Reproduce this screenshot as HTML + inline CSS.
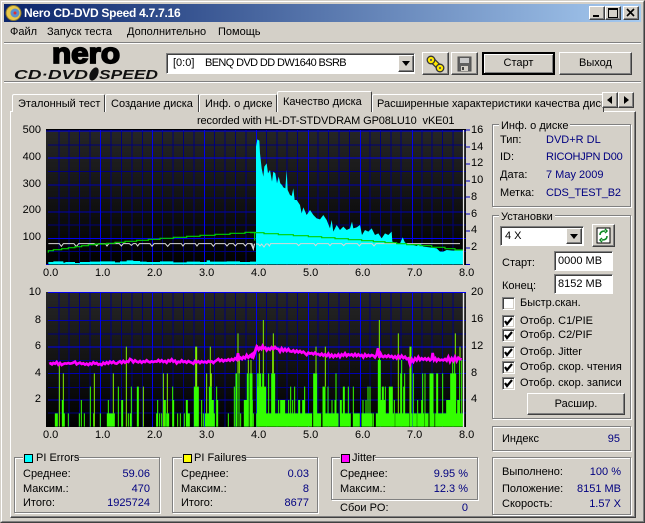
<!DOCTYPE html>
<html><head><meta charset="utf-8">
<style>
html,body{margin:0;padding:0;background:#d4d0c8}
#w{position:relative;width:645px;height:523px;overflow:hidden;background:#d4d0c8;font:11px "Liberation Sans",sans-serif;color:#000}
#w div,#w span.a{position:absolute;box-sizing:border-box}
.t{white-space:nowrap;line-height:13px;height:13px}
.r{text-align:right}
.b{color:#000080}
.g{border:1px solid #808080;box-shadow:1px 1px 0 #fff,inset 1px 1px 0 #fff}
.btn{background:#d4d0c8;border:1px solid;border-color:#fff #404040 #404040 #fff;box-shadow:inset -1px -1px 0 #808080;text-align:center}
.in{background:#fff;border:1px solid;border-color:#808080 #fff #fff #808080;box-shadow:inset 1px 1px 0 #404040}
.cb{width:13px;height:13px;background:#fff;border:1px solid;border-color:#808080 #fff #fff #808080;box-shadow:inset 1px 1px 0 #404040,inset -1px -1px 0 #d4d0c8}
.tab{background:#d4d0c8;border-top:1px solid #fff;border-left:1px solid #fff;border-right:1px solid #404040;border-radius:2px 2px 0 0;white-space:nowrap;overflow:hidden;padding:3px 0 0 5px;line-height:13px}
.sq{width:9px;height:9px;border:1px solid #000}
.leg{background:#d4d0c8;height:13px;line-height:13px;white-space:nowrap}
.ax{font-size:11px;white-space:nowrap;line-height:13px;height:13px}
svg{position:absolute;left:0;top:0}
</style></head><body><div id="w">

<div style="left:0;top:0;width:645px;height:523px;border:1px solid;border-color:#d4d0c8 #404040 #404040 #d4d0c8"></div>
<div style="left:1px;top:1px;width:643px;height:521px;border:1px solid;border-color:#fff #808080 #808080 #fff"></div>

<div style="left:4px;top:4px;width:637px;height:18px;background:linear-gradient(90deg,#0a246a,#a6caf0)"></div>
<div class="t" style="left:24px;top:6px;color:#fff;font-weight:bold;font-size:12px;line-height:14px;letter-spacing:-.27px">Nero CD-DVD Speed 4.7.7.16</div>
<svg width="645" height="523">
<circle cx="13.5" cy="13" r="7.5" fill="#e8c84a" stroke="#8a7a30" stroke-width="1"/>
<circle cx="15" cy="13" r="4.5" fill="#5a8fd0"/><circle cx="15" cy="13" r="1.5" fill="#e03030"/>
</svg>
<div class="btn" style="left:589px;top:6px;width:16px;height:14px"></div>
<div style="left:593px;top:15px;width:6px;height:2px;background:#000"></div>
<div class="btn" style="left:605px;top:6px;width:16px;height:14px"></div>
<div style="left:608px;top:8px;width:10px;height:10px;border:1px solid #000;border-top-width:2px"></div>
<div class="btn" style="left:623px;top:6px;width:16px;height:14px"></div>
<svg width="645" height="523"><path d="M627 9l7 7M634 9l-7 7" stroke="#000" stroke-width="1.600" fill="none"/></svg>

<div class="t" style="left:10px;top:26px">Файл</div>
<div class="t" style="left:47px;top:26px">Запуск теста</div>
<div class="t" style="left:127px;top:26px">Дополнительно</div>
<div class="t" style="left:218px;top:26px">Помощь</div>
<div style="left:4px;top:42px;width:637px;height:2px;border-top:1px solid #808080;border-bottom:1px solid #fff"></div>
<div style="left:4px;top:81px;width:637px;height:2px;border-top:1px solid #808080;border-bottom:1px solid #fff"></div>

<svg width="645" height="523">
<text x="52" y="63" font-family="Liberation Sans" font-weight="bold" font-size="29" textLength="68" lengthAdjust="spacingAndGlyphs" stroke="#000" stroke-width="1.700">nero</text>
<text x="14" y="79" font-family="Liberation Sans" font-weight="bold" font-style="italic" font-size="13" textLength="74" lengthAdjust="spacingAndGlyphs" fill="#111">CD·DVD</text>
<ellipse cx="94" cy="74" rx="4" ry="7" transform="rotate(25 94 74)" fill="#111"/>
<text x="99" y="79" font-family="Liberation Sans" font-weight="bold" font-style="italic" font-size="13" textLength="59" lengthAdjust="spacingAndGlyphs" fill="#111">SPEED</text>
</svg>

<div class="in" style="left:166px;top:53px;width:249px;height:21px"></div>
<div class="t" style="left:173px;top:57px">[0:0]</div>
<div class="t" style="left:205px;top:57px;letter-spacing:-.62px">BENQ DVD DD DW1640 BSRB</div>
<div class="btn" style="left:398px;top:55px;width:16px;height:17px"></div>
<div style="left:402px;top:61px;width:0;height:0;border:4px solid transparent;border-top:5px solid #000;border-bottom:0"></div>

<div class="btn" style="left:422px;top:52px;width:27px;height:23px"></div>
<svg width="645" height="523">
<path d="M432 60L440 68" stroke="#333" stroke-width="6" fill="none"/>
<path d="M432 60L440 68" stroke="#ffe800" stroke-width="3.500" fill="none"/>
<g fill="#ffe800" stroke="#333" stroke-width="1.300">
<circle cx="431" cy="60" r="3.800"/><circle cx="440" cy="68" r="3.800"/>
</g>
<circle cx="431" cy="60" r="1.100" fill="#555"/><circle cx="440" cy="68" r="1.100" fill="#555"/>
</svg>
<div class="btn" style="left:451px;top:52px;width:27px;height:23px"></div>
<svg width="645" height="523">
<path d="M458 57h13v14h-13z" fill="#606060" stroke="#505050"/>
<path d="M460 58h9v5h-9z" fill="#c8c8c8"/><path d="M461 66h7v5h-7z" fill="#d4d0c8"/><path d="M462 67h2v3h-2z" fill="#404040"/>
</svg>
<div class="btn t" style="left:482px;top:52px;width:73px;height:23px;border:2px solid #000;box-shadow:inset 1px 1px 0 #fff,inset -1px -1px 0 #808080;line-height:19px">Старт</div>
<div class="btn t" style="left:559px;top:52px;width:73px;height:23px;line-height:21px">Выход</div>

<div style="left:10px;top:111px;width:626px;height:407px;border:1px solid;border-color:#fff #404040 #404040 #fff;box-shadow:inset -1px -1px 0 #808080"></div>
<div class="tab" style="left:12px;top:94px;width:93px;height:18px">Эталонный тест</div>
<div class="tab" style="left:105px;top:94px;width:94px;height:18px">Создание диска</div>
<div class="tab" style="left:199px;top:94px;width:78px;height:18px">Инф. о диске</div>
<div class="tab" style="left:372px;top:94px;width:232px;height:18px;padding-left:4px">Расширенные характеристики качества диска</div>
<div class="tab" style="left:277px;top:91px;width:95px;height:21px;padding-top:4px;z-index:2">Качество диска</div>
<div class="btn" style="left:602px;top:92px;width:16px;height:16px"></div>
<div style="left:607px;top:96px;width:0;height:0;border:4px solid transparent;border-right:5px solid #000;border-left:0"></div>
<div class="btn" style="left:618px;top:92px;width:16px;height:16px"></div>
<div style="left:624px;top:96px;width:0;height:0;border:4px solid transparent;border-left:5px solid #000;border-right:0"></div>

<div class="t" style="left:197px;top:115px;letter-spacing:-.11px">recorded with HL-DT-STDVDRAM GP08LU10&nbsp; vKE01</div>

<svg width="645" height="523" shape-rendering="crispEdges">
<defs>
<linearGradient id="bg" x1="0" y1="0" x2="0" y2="1"><stop offset="0" stop-color="#262626"/><stop offset="1" stop-color="#000"/></linearGradient>
</defs>
<rect x="46" y="129" width="420" height="136" fill="url(#bg)"/>
<rect x="46" y="292" width="420" height="135" fill="url(#bg)"/>
<rect x="46" y="129" width="420" height="1.5" fill="#000"/>
<!-- chart 1 grid -->
<path d="M58.8 130V265M69.2 130V265M79.6 130V265M90 130V265M111.2 130V265M121.6 130V265M132 130V265M142.4 130V265M162.6 130V265M173 130V265M183.4 130V265M193.8 130V265M214.6 130V265M225 130V265M235.4 130V265M245.8 130V265M266.4 130V265M276.8 130V265M287.2 130V265M297.6 130V265M318.2 130V265M328.6 130V265M339 130V265M349.4 130V265M370 130V265M380.4 130V265M390.8 130V265M401.2 130V265M421.8 130V265M432.2 130V265M442.6 130V265M453 130V265M48 145H466M48 171.500H466M48 198H466M48 225H466M48 251.500H466" stroke="#00007a" stroke-width="1" fill="none"/>
<path d="M48 185H466M48 212H466" stroke="#0000b0" stroke-width="1" fill="none"/>
<path d="M48 131H466M48 158H466M48 238.500H466M100.500 130V265M152.500 130V265M204.500 130V265M256.500 130V265M308.500 130V265M360.500 130V265M412.500 130V265" stroke="#0000f0" stroke-width="1.400" fill="none"/>
<!-- chart 2 grid -->
<path d="M58.8 293V427M69.2 293V427M79.6 293V427M90 293V427M111.2 293V427M121.6 293V427M132 293V427M142.4 293V427M162.6 293V427M173 293V427M183.4 293V427M193.8 293V427M214.6 293V427M225 293V427M235.4 293V427M245.8 293V427M266.4 293V427M276.8 293V427M287.2 293V427M297.6 293V427M318.2 293V427M328.6 293V427M339 293V427M349.4 293V427M370 293V427M380.4 293V427M390.8 293V427M401.2 293V427M421.8 293V427M432.2 293V427M442.6 293V427M453 293V427M48 307.500H466M48 334H466M48 360.500H466M48 387.500H466M48 413H466" stroke="#00007a" stroke-width="1" fill="none"/>
<path d="M48 320.500H466M48 373.500H466M48 400H466" stroke="#0000b0" stroke-width="1" fill="none"/>
<path d="M48 292.500H466M48 347H466M100.500 293V427M152.500 293V427M204.500 293V427M256.500 293V427M308.500 293V427M360.500 293V427M412.500 293V427" stroke="#0000f0" stroke-width="1.400" fill="none"/>
</svg>

<svg width="645" height="523">
<!-- chart1 left cyan -->
<g transform="translate(0,120) scale(.33333)">
<path fill="#00ffff" d="M145 433V426H160V424H190V428H196V426H225V429H240V426H270V425H300V424H345V427H360V424H380V421H400V423H420V425H440V426H480V424H520V427H560V425H600V426H620V421H630V425H680V424H720V426H765V433Z"/>
<path fill="none" stroke="#d8d8d8" stroke-width="3" d="M145 371H178L184 379 190 371H222L229 380 236 371H284L290 378 296 371H316L321 378 326 371H358L364 378 370 371H388L394 376 400 371H408L413 378 418 371H450L456 379 462 371H496L503 379 510 371H544L549 378 554 371H586L591 378 596 371H634L640 379 646 371H675L681 378 687 371H700L706 378 712 371H730L736 378 742 371H752L755 376 760 388 763 372"/>
<path fill="none" stroke="#00d000" stroke-width="3.600" d="M145 398V392H160V389H185V386H205V383H225V380H245V377H265V374H285V372H320V370H345V367H375V364H410V361H445V358H480V355H520V352H560V349H600V346H645V343H690V340H735V337H780M764 338V362"/>
</g>
<!-- chart1 right cyan -->
<g transform="translate(250,120) scale(.33333)">
<path fill="#00ffff" d="M0 433V425H18V80L22 58 28 62 30 100 35 145 40 170 43 140 50 130 54 160 60 150 66 185 70 155 76 160 81 190 86 170 91 190 96 195 100 202 106 205 110 150 113 210 120 225 125 228 130 205 134 240 140 240 150 255 155 280 160 262 170 285 180 270 190 285 200 295 210 298 220 285 230 300 240 325 245 300 250 335 260 315 270 330 280 320 290 330 300 325 306 305 310 325 320 322 330 315 336 345 345 330 355 335 365 325 375 345 385 340 395 355 405 340 415 345 425 335 427 365 440 370 450 370 458 352 465 368 480 372 500 378 510 370 520 380 540 382 560 385 570 395 580 395 590 390 610 392 630 390 642 390V433Z"/>
<path fill="none" stroke="#d8d8d8" stroke-width="3" d="M0 371H6L10 386 14 371M18 372H25L30 378 35 372 42 381 48 372H54L58 378 62 371H140L146 377 152 371H192L197 377 202 371H235L240 377 245 371H275L281 377 287 371H322L328 378 334 371H366L372 378 378 371H440M470 371H630"/>
<path fill="none" stroke="#00d000" stroke-width="3.600" d="M0 338H42V341H85V344H130V347H175V350H215V353H255V356H295V359H335V362H370V365H405V368H440V371H470V374H510V377H545V382H585V386H615V390H640"/>
</g>
<!-- right markers white line -->
<path d="M463.500 130V265M463.500 293V427" stroke="#e8e8e8" stroke-width="1.200" fill="none"/>
<!-- chart2 bars left -->
<g transform="translate(0,285) scale(.33333)">
<path fill="none" stroke="#33ff00" stroke-width="3" d="M166 425V385M169 425V385M172 425V385M187 425V345M190 425V345M193 425V385M205 425V385M238 425V385M244 425V345M253 425V385M271 425V305M281 425V385M301 425V385M322 425V385M325 425V345M328 425V385M331 425V385M334 425V385M337 425V385M340 425V385M343 425V385M355 425V305M365 425V345M368 425V345M385 425V385M391 425V385M394 425V305M412 425V305M415 425V305M470 425V385M473 425V345M479 425V385M485 425V385M493 425V345M496 425V345M500 425V385M503 425V385M506 425V385M518 425V305M521 425V345M533 425V385M541 425V385M553 425V385M559 425V345M562 425V345M565 425V385M568 425V385M583 425V305M586 425V305M589 425V305M592 425V305M595 425V305M605 425V345M610 425V385M616 425V385M619 425V385M622 425V385M625 425V385M628 425V305M631 425V305M634 425V305M637 425V345M640 425V345M643 425V385M650 425V305M653 425V345M685 425V385M703 425V305M708 425V265M711 425V265M717 425V265M722 425V385M733 425V345M736 425V345M739 425V345M742 425V265M745 425V265M751 425V305M754 425V305M757 425V345M772 425V265M775 425V345M778 425V345"/>
<path fill="none" stroke="#80f000" stroke-width="3" d="M178 425V240M190 345V265M283 425V265M340 385V265M379 425V185M430 425V305M490 425V265M502 385V265M587 305V185M590 305V185M620 385V265M631 305V185M634 305V265M714 265V145M718 265V225M745 265V225M753 305V225"/>
<path fill="none" stroke="#ff00ff" stroke-width="8" d="M148 237 152 235 156 238 160 234 165 236 170 231 175 239 180 234 185 240 190 237 195 235 200 236 205 234 210 236 215 235 220 233 225 230 230 238 235 235 240 233 245 237 250 235 255 239 260 236 265 240 270 235 275 238 280 232 285 236 290 234 295 239 300 237 305 240 310 233 315 237 320 232 325 236 330 230 335 234 340 230 345 235 350 236 355 232 360 229 365 234 370 228 375 233 380 229 385 231 390 222 395 225 400 232 405 226 410 230 415 232 420 228 425 233 430 229 435 231 440 226 445 230 450 232 455 229 460 231 465 229 470 230 475 225 480 230 485 226 490 231 495 228 500 233 505 226 510 229 515 223 520 230 525 227 530 235 535 230 540 232 545 226 550 231 555 229 560 233 565 228 570 231 575 233 580 236 585 228 590 232 595 229 600 234 605 229 610 232 615 230 620 233 625 228 630 231 635 229 640 234 645 229 650 226 655 222 660 228 665 224 670 229 675 225 680 227 685 223 690 227 695 222 700 226 705 220 710 224 714 205 718 222 722 218 726 222 730 216 735 220 740 210 745 218 750 212 755 216 760 205 765 200 770 185 775 192 780 190"/>
</g>
<!-- chart2 bars right -->
<g transform="translate(250,285) scale(.33333)">
<path fill="none" stroke="#33ff00" stroke-width="3" d="M0 425V265M3 425V265M6 425V265M10 425V385M20 425V385M23 425V305M26 425V265M29 425V265M32 425V265M35 425V305M38 425V265M41 425V265M44 425V305M47 425V305M50 425V385M53 425V385M56 425V265M59 425V385M62 425V385M65 425V265M68 425V265M71 425V265M74 425V265M77 425V385M80 425V385M83 425V385M86 425V345M89 425V385M92 425V345M95 425V345M98 425V345M101 425V345M104 425V345M107 425V385M110 425V385M113 425V385M116 425V345M119 425V385M122 425V305M125 425V385M128 425V345M131 425V385M134 425V305M137 425V385M140 425V385M143 425V385M146 425V345M149 425V345M152 425V385M155 425V385M158 425V345M161 425V345M164 425V305M167 425V385M170 425V385M173 425V385M176 425V385M179 425V385M182 425V385M185 425V385M191 425V265M194 425V265M197 425V265M200 425V265M203 425V385M206 425V385M209 425V385M212 425V385M219 425V305M222 425V305M225 425V305M228 425V385M231 425V385M234 425V305M237 425V385M240 425V385M243 425V385M246 425V345M249 425V385M252 425V385M255 425V345M258 425V265M261 425V385M264 425V385M271 425V345M274 425V345M277 425V385M280 425V305M283 425V305M286 425V385M289 425V385M292 425V385M295 425V305M298 425V385M301 425V385M310 425V305M313 425V385M316 425V385M319 425V385M322 425V385M325 425V385M328 425V385M336 425V385M339 425V345M342 425V385M345 425V385M348 425V345M351 425V385M354 425V305M357 425V385M360 425V305M363 425V385M366 425V385M370 425V385M379 425V385M382 425V385M385 425V225M388 425V225M391 425V225M394 425V345M397 425V305M400 425V305M403 425V345M406 425V305M409 425V385M412 425V385M415 425V385M418 425V305M421 425V305M424 425V305M427 425V305M430 425V385M433 425V345M437 425V385M440 425V385M443 425V385M446 425V385M449 425V385M452 425V265M455 425V225M458 425V385M461 425V305M464 425V265M467 425V385M470 425V385M473 425V385M476 425V385M480 425V185M483 425V185M486 425V385M490 425V265M493 425V385M496 425V385M499 425V385M503 425V345M506 425V385M509 425V385M512 425V385M515 425V345M518 425V265M521 425V385M525 425V265M528 425V385M531 425V385M534 425V385M540 425V265M543 425V265M546 425V265M549 425V265M552 425V385M557 425V385M560 425V265M563 425V265M566 425V385M569 425V385M572 425V385M575 425V385M578 425V265M581 425V385M584 425V385M587 425V385M590 425V345M593 425V345M596 425V345M599 425V345M602 425V265M605 425V265M608 425V225M611 425V265M614 425V225M617 425V265M620 425V385M623 425V345M626 425V345M629 425V225M632 425V385M635 425V225M638 425V385"/>
<path fill="none" stroke="#80f000" stroke-width="3" d="M3 265V225M28 265V205M40 265V105M68 265V185M70 265V145M198 265V185M226 305V185M388 225V105M445 385V145M480 385V185M616 225V145M630 225V185"/>
<path fill="none" stroke="#ff00ff" stroke-width="8" d="M0 212 5 208 10 216 14 205 18 190 22 186 26 194 30 188 34 192 38 183 42 190 46 188 50 196 55 190 60 194 65 187 70 192 75 186 80 191 85 192 90 200 95 190 100 198 105 192 110 198 115 192 120 199 125 200 130 196 135 202 140 197 145 202 150 198 155 203 160 200 165 205 170 210 175 203 180 206 185 204 190 208 195 203 200 208 205 207 210 211 215 206 220 212 225 208 230 213 235 206 240 215 245 209 250 216 255 210 260 214 265 208 270 216 275 208 280 212 285 205 290 213 295 208 300 211 305 208 310 213 315 207 320 213 325 208 330 213 335 210 340 217 345 208 350 214 355 210 360 214 365 210 370 212 375 217 380 209 384 190 388 218 392 206 396 214 400 216 405 212 410 216 415 211 420 216 425 213 430 219 435 214 440 220 445 212 450 219 455 212 460 219 465 215 470 222 475 220 480 238 485 222 490 230 495 220 500 226 505 216 510 225 515 220 520 224 525 220 530 225 535 220 540 226 545 222 548 204 552 225 556 220 560 228 565 222 570 226 575 224 580 226 585 222 590 227 595 216 600 230 605 220 610 228 615 216 620 228 625 218 630 222 635 224"/>
</g>
<path d="M463.500 293V427" stroke="#e8e8e8" stroke-width="1.200" fill="none"/>
<!-- tick marks right -->
<path d="M466 130h4M466 147h4M466 164h4M466 181h4M466 197h4M466 214h4M466 231h4M466 248h4M466 264.500h4" stroke="#0000c0" fill="none"/>
<path d="M46 131h3M46 264.500h3" stroke="#0000c0" fill="none"/>
</svg>

<!-- axis labels chart1 -->
<div class="ax r" style="left:10px;top:124px;width:31px">500</div>
<div class="ax r" style="left:10px;top:151px;width:31px">400</div>
<div class="ax r" style="left:10px;top:178px;width:31px">300</div>
<div class="ax r" style="left:10px;top:204px;width:31px">200</div>
<div class="ax r" style="left:10px;top:231px;width:31px">100</div>
<div class="ax" style="left:471px;top:124px">16</div>
<div class="ax" style="left:471px;top:141px">14</div>
<div class="ax" style="left:471px;top:157px">12</div>
<div class="ax" style="left:471px;top:174px">10</div>
<div class="ax" style="left:471px;top:191px">8</div>
<div class="ax" style="left:471px;top:208px">6</div>
<div class="ax" style="left:471px;top:224px">4</div>
<div class="ax" style="left:471px;top:241px">2</div>
<div class="ax" style="left:43px;top:267px">0.0</div>
<div class="ax" style="left:95px;top:267px">1.0</div>
<div class="ax" style="left:147px;top:267px">2.0</div>
<div class="ax" style="left:199px;top:267px">3.0</div>
<div class="ax" style="left:251px;top:267px">4.0</div>
<div class="ax" style="left:303px;top:267px">5.0</div>
<div class="ax" style="left:355px;top:267px">6.0</div>
<div class="ax" style="left:407px;top:267px">7.0</div>
<div class="ax" style="left:459px;top:267px">8.0</div>
<!-- axis labels chart2 -->
<div class="ax r" style="left:10px;top:286px;width:31px">10</div>
<div class="ax r" style="left:10px;top:314px;width:31px">8</div>
<div class="ax r" style="left:10px;top:340px;width:31px">6</div>
<div class="ax r" style="left:10px;top:367px;width:31px">4</div>
<div class="ax r" style="left:10px;top:393px;width:31px">2</div>
<div class="ax" style="left:471px;top:286px">20</div>
<div class="ax" style="left:471px;top:313px">16</div>
<div class="ax" style="left:471px;top:340px">12</div>
<div class="ax" style="left:471px;top:367px">8</div>
<div class="ax" style="left:471px;top:393px">4</div>
<div class="ax" style="left:43px;top:429px">0.0</div>
<div class="ax" style="left:95px;top:429px">1.0</div>
<div class="ax" style="left:147px;top:429px">2.0</div>
<div class="ax" style="left:199px;top:429px">3.0</div>
<div class="ax" style="left:251px;top:429px">4.0</div>
<div class="ax" style="left:303px;top:429px">5.0</div>
<div class="ax" style="left:355px;top:429px">6.0</div>
<div class="ax" style="left:407px;top:429px">7.0</div>
<div class="ax" style="left:459px;top:429px">8.0</div>

<!-- Disc info -->
<div class="g" style="left:492px;top:124px;width:139px;height:83px"></div>
<div class="leg" style="left:499px;top:120px;padding:0 2px">Инф. о диске</div>
<div class="t" style="left:500px;top:134px">Тип:</div><div class="t b" style="left:546px;top:134px">DVD+R DL</div>
<div class="t" style="left:500px;top:151px">ID:</div><div class="t b" style="left:546px;top:151px;letter-spacing:-.25px">RICOHJPN D00</div>
<div class="t" style="left:500px;top:169px">Дата:</div><div class="t b" style="left:546px;top:169px">7 May 2009</div>
<div class="t" style="left:500px;top:187px">Метка:</div><div class="t b" style="left:546px;top:187px;letter-spacing:-.2px">CDS_TEST_B2</div>

<!-- Settings -->
<div class="g" style="left:492px;top:215px;width:139px;height:204px"></div>
<div class="leg" style="left:499px;top:211px;padding:0 2px">Установки</div>
<div class="in" style="left:500px;top:226px;width:84px;height:20px"></div>
<div class="t" style="left:505px;top:230px">4 X</div>
<div class="btn" style="left:566px;top:228px;width:16px;height:16px"></div>
<div style="left:570px;top:234px;width:0;height:0;border:4px solid transparent;border-top:5px solid #000;border-bottom:0"></div>
<div class="btn" style="left:592px;top:224px;width:23px;height:23px"></div>
<svg width="645" height="523">
<rect x="597" y="228" width="13" height="15" fill="#fff" stroke="#000"/>
<path d="M600 235c0-3 2-4 5-4M605 229l2 2-2 2M607 236c0 3-2 4-5 4M602 238l-2 2 2 2" stroke="#0a8a20" stroke-width="1.500" fill="none"/>
</svg>
<div class="t" style="left:502px;top:257px">Старт:</div>
<div class="in t" style="left:554px;top:251px;width:59px;height:20px;padding:3px 0 0 3px;line-height:13px">0000 MB</div>
<div class="t" style="left:502px;top:280px">Конец:</div>
<div class="in t" style="left:554px;top:274px;width:59px;height:20px;padding:3px 0 0 3px;line-height:13px">8152 MB</div>

<div class="cb" style="left:502px;top:297px"></div>
<div class="t" style="left:520px;top:297px">Быстр.скан.</div>
<div class="cb" style="left:502px;top:315px"></div><div class="t" style="left:520px;top:315px">Отобр. C1/PIE</div>
<div class="cb" style="left:502px;top:329px"></div><div class="t" style="left:520px;top:329px">Отобр. C2/PIF</div>
<div class="cb" style="left:502px;top:346px"></div><div class="t" style="left:520px;top:346px">Отобр. Jitter</div>
<div class="cb" style="left:502px;top:361px"></div><div class="t" style="left:520px;top:361px">Отобр. скор. чтения</div>
<div class="cb" style="left:502px;top:377px"></div><div class="t" style="left:520px;top:377px">Отобр. скор. записи</div>
<svg width="645" height="523">
<g fill="none" stroke="#000" stroke-width="2.200">
<path d="M505 321l2 3 5-6"/><path d="M505 335l2 3 5-6"/><path d="M505 352l2 3 5-6"/><path d="M505 367l2 3 5-6"/><path d="M505 383l2 3 5-6"/>
</g>
</svg>
<div class="btn t" style="left:527px;top:393px;width:98px;height:22px;line-height:20px">Расшир.</div>

<div class="g" style="left:492px;top:426px;width:139px;height:25px"></div>
<div class="t" style="left:502px;top:433px">Индекс</div><div class="t r b" style="left:570px;top:433px;width:50px">95</div>

<div class="g" style="left:492px;top:457px;width:139px;height:58px"></div>
<div class="t" style="left:502px;top:466px">Выполнено:</div><div class="t r b" style="left:570px;top:466px;width:51px">100 %</div>
<div class="t" style="left:502px;top:483px">Положение:</div><div class="t r b" style="left:570px;top:483px;width:51px">8151 MB</div>
<div class="t" style="left:502px;top:498px">Скорость:</div><div class="t r b" style="left:570px;top:498px;width:51px">1.57 X</div>

<!-- PI Errors -->
<div class="g" style="left:14px;top:457px;width:146px;height:56px"></div>
<div class="leg" style="left:23px;top:452px;width:53px"></div>
<div class="sq" style="left:24px;top:454px;background:#00ffff"></div>
<div class="t" style="left:36px;top:452px">PI Errors</div>
<div class="t" style="left:23px;top:468px">Среднее:</div><div class="t r b" style="left:90px;top:468px;width:60px">59.06</div>
<div class="t" style="left:23px;top:483px">Максим.:</div><div class="t r b" style="left:90px;top:483px;width:60px">470</div>
<div class="t" style="left:23px;top:497px">Итого:</div><div class="t r b" style="left:90px;top:497px;width:60px">1925724</div>

<!-- PI Failures -->
<div class="g" style="left:172px;top:457px;width:146px;height:56px"></div>
<div class="leg" style="left:182px;top:452px;width:62px"></div>
<div class="sq" style="left:183px;top:454px;background:#ffff00"></div>
<div class="t" style="left:194px;top:452px">PI Failures</div>
<div class="t" style="left:181px;top:468px">Среднее:</div><div class="t r b" style="left:249px;top:468px;width:60px">0.03</div>
<div class="t" style="left:181px;top:483px">Максим.:</div><div class="t r b" style="left:249px;top:483px;width:60px">8</div>
<div class="t" style="left:181px;top:497px">Итого:</div><div class="t r b" style="left:249px;top:497px;width:60px">8677</div>

<!-- Jitter -->
<div class="g" style="left:331px;top:457px;width:147px;height:43px"></div>
<div class="leg" style="left:340px;top:452px;width:35px"></div>
<div class="sq" style="left:341px;top:454px;background:#ff00ff"></div>
<div class="t" style="left:352px;top:452px">Jitter</div>
<div class="t" style="left:340px;top:468px">Среднее:</div><div class="t r b" style="left:408px;top:468px;width:60px">9.95 %</div>
<div class="t" style="left:340px;top:483px">Максим.:</div><div class="t r b" style="left:408px;top:483px;width:60px">12.3 %</div>
<div class="t" style="left:340px;top:502px">Сбои PO:</div><div class="t r b" style="left:408px;top:502px;width:60px">0</div>

</div></body></html>
